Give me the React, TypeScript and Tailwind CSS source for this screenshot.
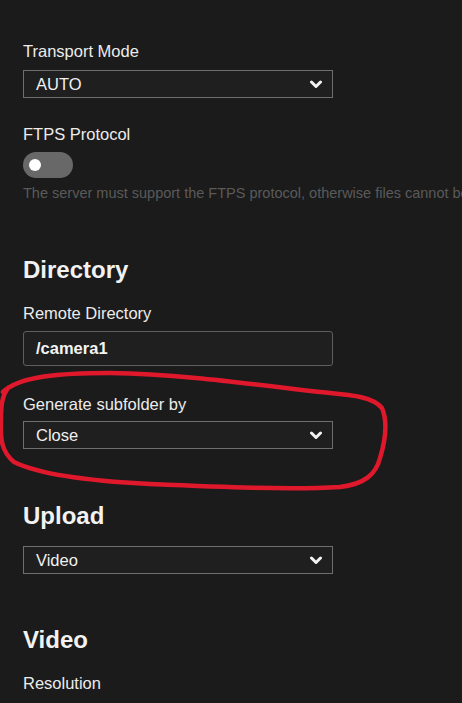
import { useState } from "react";

const Chevron = () => (
  <svg width="12" height="9" viewBox="0 0 12 9" className="shrink-0">
    <polyline points="1.5,2 6,6.5 10.5,2" fill="none" stroke="#f2f2f2" strokeWidth="3" strokeLinecap="round" strokeLinejoin="round" />
  </svg>
);

const Select = ({ value }: { value: string }) => (
  <div className="w-[310px] h-[28px] border border-[#6e6e6e] bg-[#1f1f1f] flex items-center justify-between pl-[12px] pr-[10px]">
    <span className="text-[16.5px] text-[#f0f0f0] leading-none">{value}</span>
    <Chevron />
  </div>
);

const Label = ({ children, className = "" }: { children: string; className?: string }) => (
  <p className={`text-[16.5px] leading-[20px] text-[#ececec] ${className}`}>{children}</p>
);

const Heading = ({ children, className = "" }: { children: string; className?: string }) => (
  <h2 className={`text-[24px] leading-[30px] font-bold text-[#f2f2f2] ${className}`}>{children}</h2>
);

export default function App() {
  const [ftps, setFtps] = useState(false);

  return (
    <div
      className="relative min-h-[703px] w-[462px] overflow-hidden bg-[#1b1b1b] px-[23px] pt-[41px]"
      style={{ fontFamily: '"Liberation Sans", Arial, sans-serif' }}
    >
      {/* Transport */}
      <Label className="mb-[9px]">Transport Mode</Label>
      <Select value="AUTO" />

      <Label className="mt-[26px] mb-[8px]">FTPS Protocol</Label>
      <button
        onClick={() => setFtps(!ftps)}
        className={`w-[50px] h-[26px] rounded-full flex items-center px-[6px] ${ftps ? "bg-[#3b82f6] justify-end" : "bg-[#686868] justify-start"}`}
      >
        <span className="w-[12px] h-[12px] rounded-full bg-white" />
      </button>
      <p className="mt-[6px] text-[14.5px] leading-[18px] text-[#5a5a5a] whitespace-nowrap">
        The server must support the FTPS protocol, otherwise files cannot be uploaded.
      </p>

      {/* Directory */}
      <Heading className="mt-[53px]">Directory</Heading>
      <Label className="mt-[18px] mb-[8px]">Remote Directory</Label>
      <div className="w-[310px] h-[35px] rounded-[3px] border border-[#5e5e5e] bg-[#1f1f1f] flex items-center pl-[12px]">
        <span className="text-[16.5px] font-bold text-[#f4f4f4]">/camera1</span>
      </div>

      <Label className="mt-[28px] mb-[7px]">Generate subfolder by</Label>
      <Select value="Close" />

      {/* Upload */}
      <Heading className="mt-[52px] mb-[15px]">Upload</Heading>
      <Select value="Video" />

      {/* Video */}
      <Heading className="mt-[51px]">Video</Heading>
      <Label className="mt-[18px]">Resolution</Label>

      {/* hand-drawn annotation */}
      <svg className="absolute left-0 top-0 pointer-events-none" width="462" height="703" viewBox="0 0 462 703">
        <path
          d="M 3 392 C 20 376, 60 373, 110 373 C 180 374, 250 384, 320 392 C 350 395, 372 396, 382 408 C 389 425, 384 445, 380 458 C 376 474, 365 484, 340 487 C 290 490, 220 487, 150 484 C 90 481, 40 475, 14 462 C 2 452, 0 440, 1 420 C 1 405, 2 396, 8 388"
          fill="none"
          stroke="#e0182c"
          strokeWidth="4.5"
          strokeLinecap="round"
          strokeLinejoin="round"
        />
      </svg>
    </div>
  );
}
